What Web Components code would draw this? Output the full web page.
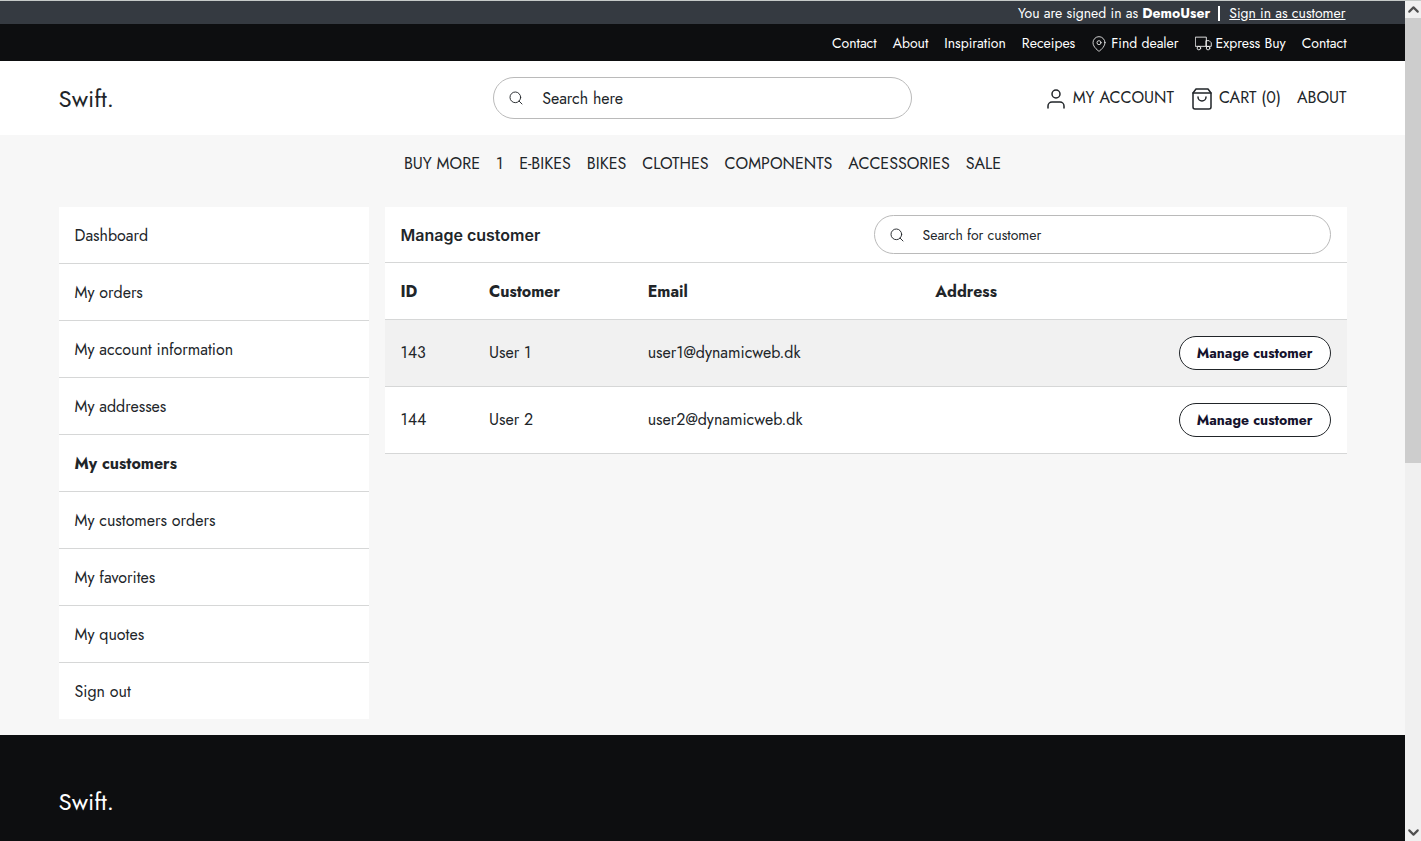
<!DOCTYPE html>
<html lang="en">
<head>
<meta charset="utf-8">
<meta name="viewport" content="width=device-width, initial-scale=1">
<title>Swift - My customers</title>
<style>
  html { height: 100%; }
  body {
    margin: 0;
    min-height: 100vh;
    box-sizing: border-box;
    border-top: 1px solid #c6cac8;
    display: flex;
    overflow: hidden;
    font: 16px/24px Jost, Lato, sans-serif;
    color: #212529;
    background: #f7f7f7;
    --ink: #212529;
    --line: #d6d7d7;
    --field-line: #bababa;
    --dark: #0d0e10;
    /* centres the content at 1288px, with a 16px minimum margin */
    --gutter: max(16px, calc((100% - 1288px) / 2));
  }
</style>
</head>
<body>
<swift-page></swift-page>
<scroll-rail></scroll-rail>

<script>
const icons = {
  search: '<circle cx="11" cy="11" r="8"/><path d="M21 21l-4.35-4.35"/>',
  pin: '<path d="M21 10c0 7-9 13-9 13s-9-6-9-13a9 9 0 0 1 18 0z"/><circle cx="12" cy="10" r="3"/>',
  truck: '<path d="M1 3h15v13H1z"/><path d="M16 8h4l3 3v5h-7z"/><circle cx="5.5" cy="18.5" r="2.5"/><circle cx="18.5" cy="18.5" r="2.5"/>',
  user: '<path d="M20 21v-2a4 4 0 0 0-4-4H8a4 4 0 0 0-4 4v2"/><circle cx="12" cy="7" r="4"/>',
  bag: '<path d="M6 2L3 6v14a2 2 0 0 0 2 2h14a2 2 0 0 0 2-2V6l-3-4z"/><path d="M3 6h18"/><path d="M16 10a4 4 0 0 1-8 0"/>',
  up: '<path d="M6 15l6-6 6 6"/>',
  down: '<path d="M6 9l6 6 6-6"/>'
};

class Base extends HTMLElement {
  connectedCallback() {
    if (this.shadowRoot) return;
    const root = this.attachShadow({ mode: 'open' });
    root.innerHTML = '<style>*{box-sizing:border-box}:host{display:block;box-sizing:border-box}a{color:inherit;text-decoration:none}</style>' + this.render();
  }
}

class SwiftIcon extends Base {
  render() {
    const size = this.getAttribute('size') || 24;
    const stroke = this.getAttribute('stroke') || 1.5;
    return `<style>:host{display:block;flex:none}svg{display:block}</style>
      <svg width="${size}" height="${size}" viewBox="0 0 24 24" fill="none" stroke="currentColor" stroke-width="${stroke}" stroke-linecap="round" stroke-linejoin="round" aria-hidden="true">${icons[this.getAttribute('name')]}</svg>`;
  }
}

class SwiftLogo extends Base {
  render() {
    return `<style>:host{padding-top:2px;font-size:24px;line-height:32px}</style><a href="#">Swift.</a>`;
  }
}

class SearchField extends Base {
  render() {
    const label = this.getAttribute('label');
    return `<style>
      form{display:flex;align-items:center;gap:18px;height:42px;margin:0;padding:0 14px;border:1px solid var(--field-line);border-radius:21px;background:#fff}
      input{flex:1;min-width:0;height:24px;padding:1px 0 0;border:0;outline:0;background:none;font:inherit;color:inherit}
      input::placeholder{color:var(--ink);opacity:1}
      :host([compact]) form{height:39px;border-radius:20px}
      :host([compact]) input{padding:0;font-size:14px}
      </style>
      <form role="search"><swift-icon name="search" size="16" stroke="1.4"></swift-icon><input type="text" aria-label="${label}" placeholder="${label}"></form>`;
  }
}

class SignedBar extends Base {
  render() {
    return `<style>
      :host{background:#353a41;color:#fff;font-size:14px;line-height:21px}
      div{display:flex;justify-content:flex-end;align-items:center;padding:2px var(--gutter) 0}
      i{width:2px;height:15px;margin:0 9px 0 8px;background:#fff}
      a{margin-right:1px;text-decoration:underline}
      </style>
      <div><span>You are signed in as <b>DemoUser</b></span><i></i><a href="#">Sign in as customer</a></div>`;
  }
}

class ServiceNav extends Base {
  render() {
    return `<style>
      :host{background:var(--dark);color:#fff;font-size:14px;line-height:35px}
      nav{display:flex;justify-content:flex-end;gap:16px;padding:2px var(--gutter) 0}
      a{display:flex;align-items:center;gap:4px}
      </style>
      <nav><a href="#">Contact</a><a href="#">About</a><a href="#">Inspiration</a><a href="#">Receipes</a><a href="#"><swift-icon name="pin" size="16" stroke="1.2"></swift-icon>Find dealer</a><a href="#"><swift-icon name="truck" size="17" stroke="1.2"></swift-icon>Express Buy</a><a href="#">Contact</a></nav>`;
  }
}

class SiteHeader extends Base {
  render() {
    return `<style>
      :host{background:#fff}
      header{display:grid;grid-template-columns:repeat(3,1fr);gap:16px;align-items:center;padding:16px var(--gutter)}
      nav{display:flex;justify-content:flex-end;gap:16px;margin-top:2px;line-height:22px}
      a{display:flex;align-items:flex-start;gap:5px}
      </style>
      <header><swift-logo></swift-logo><search-field label="Search here"></search-field>
      <nav><a href="#"><swift-icon name="user" size="24"></swift-icon>MY ACCOUNT</a><a href="#"><swift-icon name="bag" size="24"></swift-icon>CART (0)</a><a href="#">ABOUT</a></nav></header>`;
  }
}

class CategoryNav extends Base {
  render() {
    const items = ['BUY MORE', '1', 'E-BIKES', 'BIKES', 'CLOTHES', 'COMPONENTS', 'ACCESSORIES', 'SALE'];
    return `<style>nav{display:flex;justify-content:center;gap:16px;padding:17px 0 15px}</style>
      <nav>${items.map(t => `<a href="#">${t}</a>`).join('')}</nav>`;
  }
}

class AccountMenu extends Base {
  render() {
    const items = ['Dashboard', 'My orders', 'My account information', 'My addresses', 'My customers', 'My customers orders', 'My favorites', 'My quotes', 'Sign out'];
    return `<style>
      nav{background:#fff}
      a{display:block;padding:17px 16px 15px}
      a + a{border-top:1px solid var(--line)}
      a[aria-current]{font-weight:700}
      </style>
      <nav>${items.map(t => `<a href="#"${t === 'My customers' ? ' aria-current="page"' : ''}>${t}</a>`).join('')}</nav>`;
  }
}

class CustomerPanel extends Base {
  render() {
    const rows = [[143, 'User 1', 'user1@dynamicweb.dk'], [144, 'User 2', 'user2@dynamicweb.dk']];
    return `<style>
      :host{background:#fff}
      header{display:grid;grid-template-columns:1fr 1fr;gap:16px;align-items:center;padding:8px 16px;border-bottom:1px solid var(--line)}
      h1{margin:0;font:600 16px/24px Inter,sans-serif}
      table{width:100%;table-layout:fixed;border-collapse:separate;border-spacing:0}
      th,td{padding:16px;text-align:left;border-bottom:1px solid var(--line)}
      thead th{padding:17px 16px 15px}
      th:nth-child(1){width:9.2%}
      th:nth-child(2){width:16.5%}
      th:nth-child(3){width:29.9%}
      tbody tr:nth-child(odd){background:#f1f1f1}
      button{display:block;margin-left:auto;padding:0 17px;height:34px;border:1px solid var(--ink);border-radius:17px;background:#fff;color:#14122d;font:700 14px/20px Jost,Lato,sans-serif}
      </style>
      <header><h1>Manage customer</h1><search-field compact label="Search for customer"></search-field></header>
      <table><thead><tr><th>ID</th><th>Customer</th><th>Email</th><th>Address</th><td></td></tr></thead>
      <tbody>${rows.map(r => `<tr>${r.map(c => `<td>${c}</td>`).join('')}<td></td><td><button type="button">Manage customer</button></td></tr>`).join('')}</tbody></table>`;
  }
}

class SiteFooter extends Base {
  render() {
    return `<style>:host{flex:1;padding:49px var(--gutter) 0;background:var(--dark);color:#fff}</style>
      <footer><swift-logo></swift-logo></footer>`;
  }
}

class SwiftPage extends Base {
  render() {
    return `<style>
      :host{flex:1;min-width:0;display:flex;flex-direction:column}
      main{display:grid;grid-template-columns:repeat(12,1fr);gap:16px;align-items:start;padding:16px var(--gutter)}
      account-menu{grid-column:span 3}
      customer-panel{grid-column:span 9}
      </style>
      <signed-bar></signed-bar><service-nav></service-nav><site-header></site-header><category-nav></category-nav>
      <main><account-menu></account-menu><customer-panel></customer-panel></main>
      <site-footer></site-footer>`;
  }
}

class ScrollRail extends Base {
  render() {
    return `<style>
      :host{width:16px;display:flex;flex-direction:column;align-items:center;background:#f0f0f0;color:#505050}
      div{flex:1;align-self:stretch}
      i{display:block;height:55.2%;background:#cdcdcd}
      </style>
      <swift-icon name="up" size="17" stroke="3"></swift-icon><div><i></i></div><swift-icon name="down" size="17" stroke="3"></swift-icon>`;
  }
}

customElements.define('swift-icon', SwiftIcon);
customElements.define('swift-logo', SwiftLogo);
customElements.define('search-field', SearchField);
customElements.define('signed-bar', SignedBar);
customElements.define('service-nav', ServiceNav);
customElements.define('site-header', SiteHeader);
customElements.define('category-nav', CategoryNav);
customElements.define('account-menu', AccountMenu);
customElements.define('customer-panel', CustomerPanel);
customElements.define('site-footer', SiteFooter);
customElements.define('swift-page', SwiftPage);
customElements.define('scroll-rail', ScrollRail);
</script>
</body>
</html>
